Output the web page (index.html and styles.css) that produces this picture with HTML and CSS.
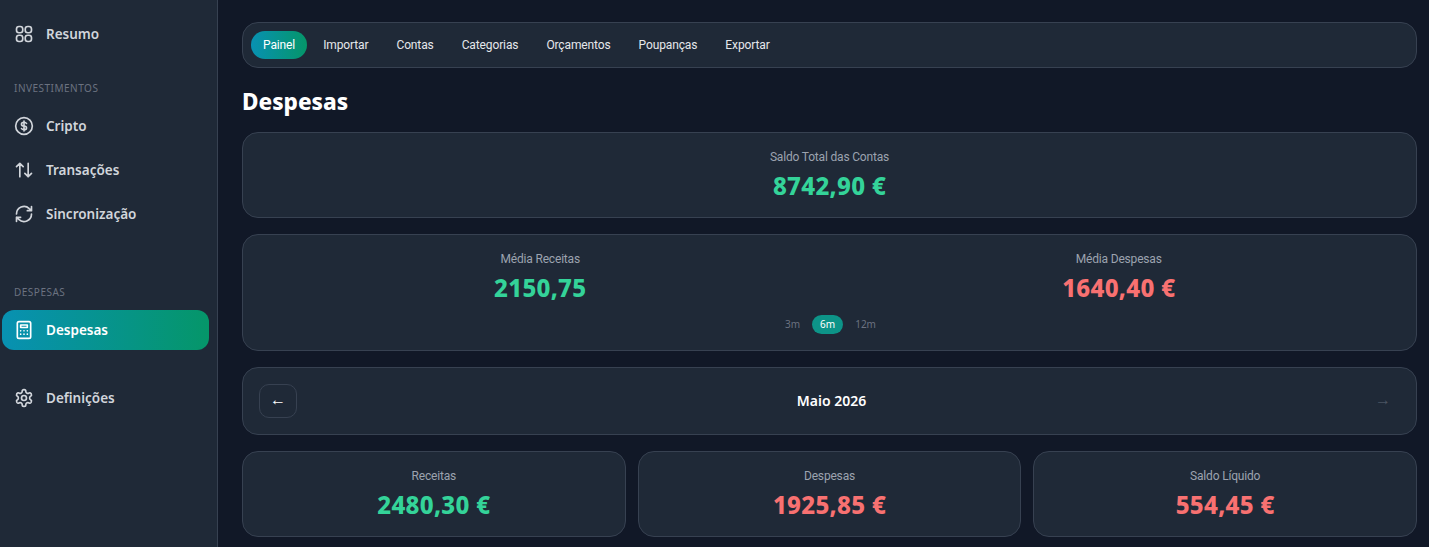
FILE: index.html
```html
<!DOCTYPE html>
<html lang="pt">
<head>
    <meta charset="UTF-8">
    <title>Despesas</title>
    <link rel="stylesheet" href="styles.css">
</head>
<body>
    <div class="app">
        <!-- Menu lateral -->
        <aside class="sidebar">
            <a class="nav-item">
                <svg class="nav-icon" viewBox="0 0 24 24"><rect x="3" y="3" width="7.5" height="7.5" rx="3"/><rect x="13.5" y="3" width="7.5" height="7.5" rx="3"/><rect x="3" y="13.5" width="7.5" height="7.5" rx="3"/><rect x="13.5" y="13.5" width="7.5" height="7.5" rx="3"/></svg>
                Resumo
            </a>
            <div class="nav-label nav-label-first">INVESTIMENTOS</div>
            <a class="nav-item">
                <svg class="nav-icon" viewBox="0 0 24 24"><circle cx="12" cy="12" r="10"/><path d="M15 9c-.5-1-1.600-1.500-3-1.500-1.800 0-3 .9-3 2.250S10.200 12 12 12s3 .9 3 2.250-1.200 2.250-3 2.250c-1.400 0-2.500-.5-3-1.500M12 6v12"/></svg>
                Cripto
            </a>
            <a class="nav-item">
                <svg class="nav-icon" viewBox="0 0 24 24"><path d="M7 20V4M3 8l4-4 4 4M17 4v16M13 16l4 4 4-4"/></svg>
                Transações
            </a>
            <a class="nav-item">
                <svg class="nav-icon" viewBox="0 0 24 24"><path d="M3 12a9 9 0 0 1 15.300-6.400L21 8M21 3v5h-5M21 12a9 9 0 0 1-15.300 6.400L3 16M3 21v-5h5"/></svg>
                Sincronização
            </a>
            <div class="nav-label nav-label-second">DESPESAS</div>
            <a class="nav-item active">
                <svg class="nav-icon" viewBox="0 0 24 24"><rect x="4" y="2" width="16" height="20" rx="2"/><path d="M8 6h8v3H8zM8 13h.01M12 13h.01M16 13h.01M8 17h.01M12 17h.01M16 17h.01"/></svg>
                Despesas
            </a>
            <a class="nav-item nav-settings">
                <svg class="nav-icon" viewBox="0 0 24 24"><path d="M12.200 2h-.4a2 2 0 0 0-2 2v.2a2 2 0 0 1-1 1.700l-.4.3a2 2 0 0 1-2 0l-.2-.1a2 2 0 0 0-2.700.7l-.2.4a2 2 0 0 0 .7 2.700l.2.1a2 2 0 0 1 1 1.700v.5a2 2 0 0 1-1 1.800l-.2.1a2 2 0 0 0-.7 2.700l.2.4a2 2 0 0 0 2.700.7l.2-.1a2 2 0 0 1 2 0l.4.3a2 2 0 0 1 1 1.700v.2a2 2 0 0 0 2 2h.4a2 2 0 0 0 2-2v-.2a2 2 0 0 1 1-1.700l.4-.3a2 2 0 0 1 2 0l.2.1a2 2 0 0 0 2.700-.7l.2-.4a2 2 0 0 0-.7-2.700l-.2-.1a2 2 0 0 1-1-1.800v-.5a2 2 0 0 1 1-1.700l.2-.1a2 2 0 0 0 .7-2.700l-.2-.4a2 2 0 0 0-2.700-.7l-.2.1a2 2 0 0 1-2 0l-.4-.3a2 2 0 0 1-1-1.700V4a2 2 0 0 0-2-2z"/><circle cx="12" cy="12" r="3"/></svg>
                Definições
            </a>
        </aside>

        <main class="main">
            <!-- Separadores -->
            <nav class="tabs">
                <a class="tab active">Painel</a>
                <a class="tab">Importar</a>
                <a class="tab">Contas</a>
                <a class="tab">Categorias</a>
                <a class="tab">Orçamentos</a>
                <a class="tab">Poupanças</a>
                <a class="tab">Exportar</a>
            </nav>

            <h1 class="page-title">Despesas</h1>

            <section class="card stat">
                <div class="stat-label">Saldo Total das Contas</div>
                <div class="stat-value green">8742,90 €</div>
            </section>

            <section class="card averages">
                <div class="averages-row">
                    <div class="stat">
                        <div class="stat-label">Média Receitas</div>
                        <div class="stat-value green">2150,75</div>
                    </div>
                    <div class="stat">
                        <div class="stat-label">Média Despesas</div>
                        <div class="stat-value red">1640,40 €</div>
                    </div>
                </div>
                <div class="range">
                    <span class="range-btn">3m</span>
                    <span class="range-btn active">6m</span>
                    <span class="range-btn">12m</span>
                </div>
            </section>

            <section class="card month">
                <button class="month-btn">←</button>
                <div class="month-name">Maio 2026</div>
                <button class="month-btn disabled">→</button>
            </section>

            <div class="summary">
                <section class="card stat">
                    <div class="stat-label">Receitas</div>
                    <div class="stat-value green">2480,30 €</div>
                </section>
                <section class="card stat">
                    <div class="stat-label">Despesas</div>
                    <div class="stat-value red">1925,85 €</div>
                </section>
                <section class="card stat">
                    <div class="stat-label">Saldo Líquido</div>
                    <div class="stat-value red">554,45 €</div>
                </section>
            </div>
        </main>
    </div>
</body>
</html>
```

FILE: styles.css
```css
* {
    margin: 0;
    padding: 0;
    box-sizing: border-box;
}

html, body {
    height: 100%;
    overflow: hidden;
}

body {
    font-family: "Noto Sans", "Open Sans", Arial, sans-serif;
    background-color: #111827;
    color: #fff;
}

.app {
    display: flex;
    height: 100%;
}

/* Menu lateral */
.sidebar {
    width: 218px;
    flex-shrink: 0;
    padding: 14px 8px 0 2px;
    background-color: #1f2937;
    border-right: 1px solid #374151;
}

.nav-item {
    display: flex;
    align-items: center;
    gap: 12px;
    height: 40px;
    margin-bottom: 4px;
    padding-left: 12px;
    border-radius: 12px;
    font-size: 13.5px;
    font-weight: 600;
    color: #d1d5db;
}

.nav-item.active {
    background: linear-gradient(90deg, #0891b2, #059669);
    color: #fff;
}

.nav-icon {
    width: 20px;
    height: 20px;
    flex-shrink: 0;
    fill: none;
    stroke: currentColor;
    stroke-width: 2;
    stroke-linecap: round;
    stroke-linejoin: round;
}

.nav-settings {
    margin-top: 28px;
}

.nav-label {
    height: 16px;
    padding-left: 12px;
    font-size: 10px;
    line-height: 16px;
    letter-spacing: 0.5px;
    color: #6b7280;
}

.nav-label-first {
    margin: 26px 0 10px;
}

.nav-label-second {
    margin: 50px 0 10px;
}

/* Conteudo */
.main {
    flex: 1;
    min-width: 0;
    padding: 22px 12px 0 24px;
}

.card {
    background-color: #1f2937;
    border: 1px solid #374151;
    border-radius: 16px;
}

.tabs {
    display: flex;
    align-items: center;
    height: 46px;
    padding: 0 8px;
    background-color: #1f2937;
    border: 1px solid #374151;
    border-radius: 16px;
}

.tab {
    padding: 0 12px;
    margin-right: 4px;
    height: 28px;
    line-height: 28px;
    border-radius: 14px;
    font-family: Roboto, Arial, sans-serif;
    font-size: 12px;
    letter-spacing: -0.12px;
    color: #e5e7eb;
}

.tab.active {
    background: linear-gradient(90deg, #0891b2, #059669);
    color: #fff;
}

.page-title {
    height: 64px;
    padding-top: 18px;
    font-size: 22.5px;
    line-height: 32px;
    font-weight: 800;
}

/* Cartoes de valores */
.stat {
    text-align: center;
}

.card.stat {
    height: 86px;
    padding-top: 16px;
    margin-bottom: 16px;
}

.stat-label {
    height: 16px;
    font-family: Roboto, Arial, sans-serif;
    font-size: 12px;
    letter-spacing: -0.18px;
    line-height: 16px;
    color: #9ca3af;
}

.stat-value {
    margin-top: 5px;
    font-size: 24px;
    line-height: 32px;
    font-weight: 800;
    letter-spacing: 0.3px;
}

.green {
    color: #34d399;
}

.red {
    color: #f87171;
}

.averages {
    height: 117px;
    padding-top: 16px;
    margin-bottom: 16px;
}

.averages-row {
    display: grid;
    grid-template-columns: 1fr 1fr;
    padding: 0 8px;
}

.range {
    display: flex;
    justify-content: center;
    gap: 4px;
    margin-top: 11px;
    padding-left: 2px;
}

.range-btn {
    height: 19px;
    padding: 0 8px;
    border-radius: 10px;
    font-size: 10px;
    line-height: 19px;
    color: #6b7280;
}

.range-btn.active {
    background-color: #0d9488;
    color: #fff;
}

.month {
    display: flex;
    align-items: center;
    justify-content: space-between;
    height: 68px;
    padding: 0 16px;
    margin-bottom: 16px;
}

.month-name {
    font-size: 14px;
    line-height: 18px;
    padding-bottom: 1px;
    font-weight: 600;
}

.month-btn {
    width: 38px;
    height: 34px;
    padding-bottom: 4px;
    background: transparent;
    border: 1px solid #374151;
    border-radius: 10px;
    font-family: inherit;
    font-size: 16px;
    color: #fff;
}

.month-btn.disabled {
    width: 34px;
    border-color: transparent;
    color: #4b5563;
}

.summary {
    display: grid;
    grid-template-columns: repeat(3, 1fr);
    gap: 12px;
}
```
